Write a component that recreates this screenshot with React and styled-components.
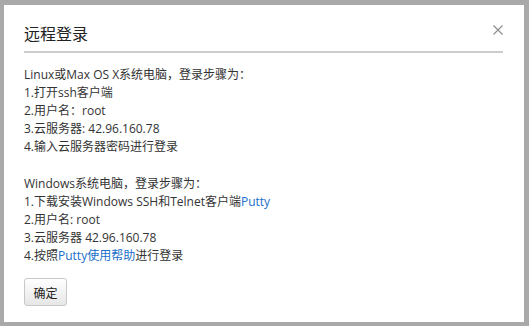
import React from "react";
import styled, { createGlobalStyle } from "styled-components";

const Global = createGlobalStyle`
  html, body { margin: 0; padding: 0; }
  body {
    background: #a9a9a9;
    width: 529px;
    height: 326px;
    overflow: hidden;
    font-family: "Open Sans", "Noto Sans CJK SC", sans-serif;
  }
`;

const Overlay = styled.div`
  padding: 5px 5px 4px 4px;
`;

const Dialog = styled.div`
  background: #fff;
  width: 520px;
  height: 317px;
  box-sizing: border-box;
  padding: 0 21px 0 20px;
  display: flex;
  flex-direction: column;
`;

const Header = styled.div`
  display: flex;
  align-items: flex-start;
  justify-content: space-between;
  height: 46px;
  border-bottom: 2px solid #cccccc;
`;

const Title = styled.h3`
  margin: 16px 0 0 0;
  font-size: 16px;
  line-height: 24px;
  font-weight: normal;
  color: #222;
  font-family: "Noto Sans CJK SC", sans-serif;
`;

const Close = styled.button`
  background: none;
  border: none;
  padding: 0;
  margin: 20px 0 0 0;
  width: 10px;
  height: 10px;
  cursor: pointer;
  display: flex;
`;

const Body = styled.div`
  padding-top: 13px;
  font-size: 12px;
  line-height: 18px;
  color: #333;
`;

const Section = styled.div`
  margin-bottom: ${(p) => p.$gap || 0}px;
`;

const Line = styled.div``;

const Link = styled.a`
  color: #1a6fc9;
  text-decoration: none;
`;

const Footer = styled.div`
  padding-top: 13px;
`;

const Button = styled.button`
  width: 43px;
  height: 28px;
  border: 1px solid #c8c8c8;
  border-radius: 3px;
  background: linear-gradient(#ffffff, #e6e6e6);
  font-size: 12px;
  color: #222;
  font-family: "Noto Sans CJK SC", sans-serif;
  padding: 0;
`;

export default function App() {
  return (
    <>
      <Global />
      <Overlay>
        <Dialog>
          <Header>
            <Title>远程登录</Title>
            <Close aria-label="close">
              <svg width="10" height="10" viewBox="0 0 10 10">
                <path d="M0.5 0.5L9.5 9.5M9.5 0.5L0.5 9.5" stroke="#8a8a8a" strokeWidth="1.1" />
              </svg>
            </Close>
          </Header>
          <Body>
            <Section $gap={19}>
              <Line>Linux或Max OS X系统电脑，登录步骤为：</Line>
              <Line>1.打开ssh客户端</Line>
              <Line>2.用户名：root</Line>
              <Line>3.云服务器: 42.96.160.78</Line>
              <Line>4.输入云服务器密码进行登录</Line>
            </Section>
            <Section>
              <Line>Windows系统电脑，登录步骤为：</Line>
              <Line>
                1.下载安装Windows SSH和Telnet客户端<Link href="#">Putty</Link>
              </Line>
              <Line>2.用户名: root</Line>
              <Line>3.云服务器 42.96.160.78</Line>
              <Line>
                4.按照<Link href="#">Putty使用帮助</Link>进行登录
              </Line>
            </Section>
          </Body>
          <Footer>
            <Button>确定</Button>
          </Footer>
        </Dialog>
      </Overlay>
    </>
  );
}
